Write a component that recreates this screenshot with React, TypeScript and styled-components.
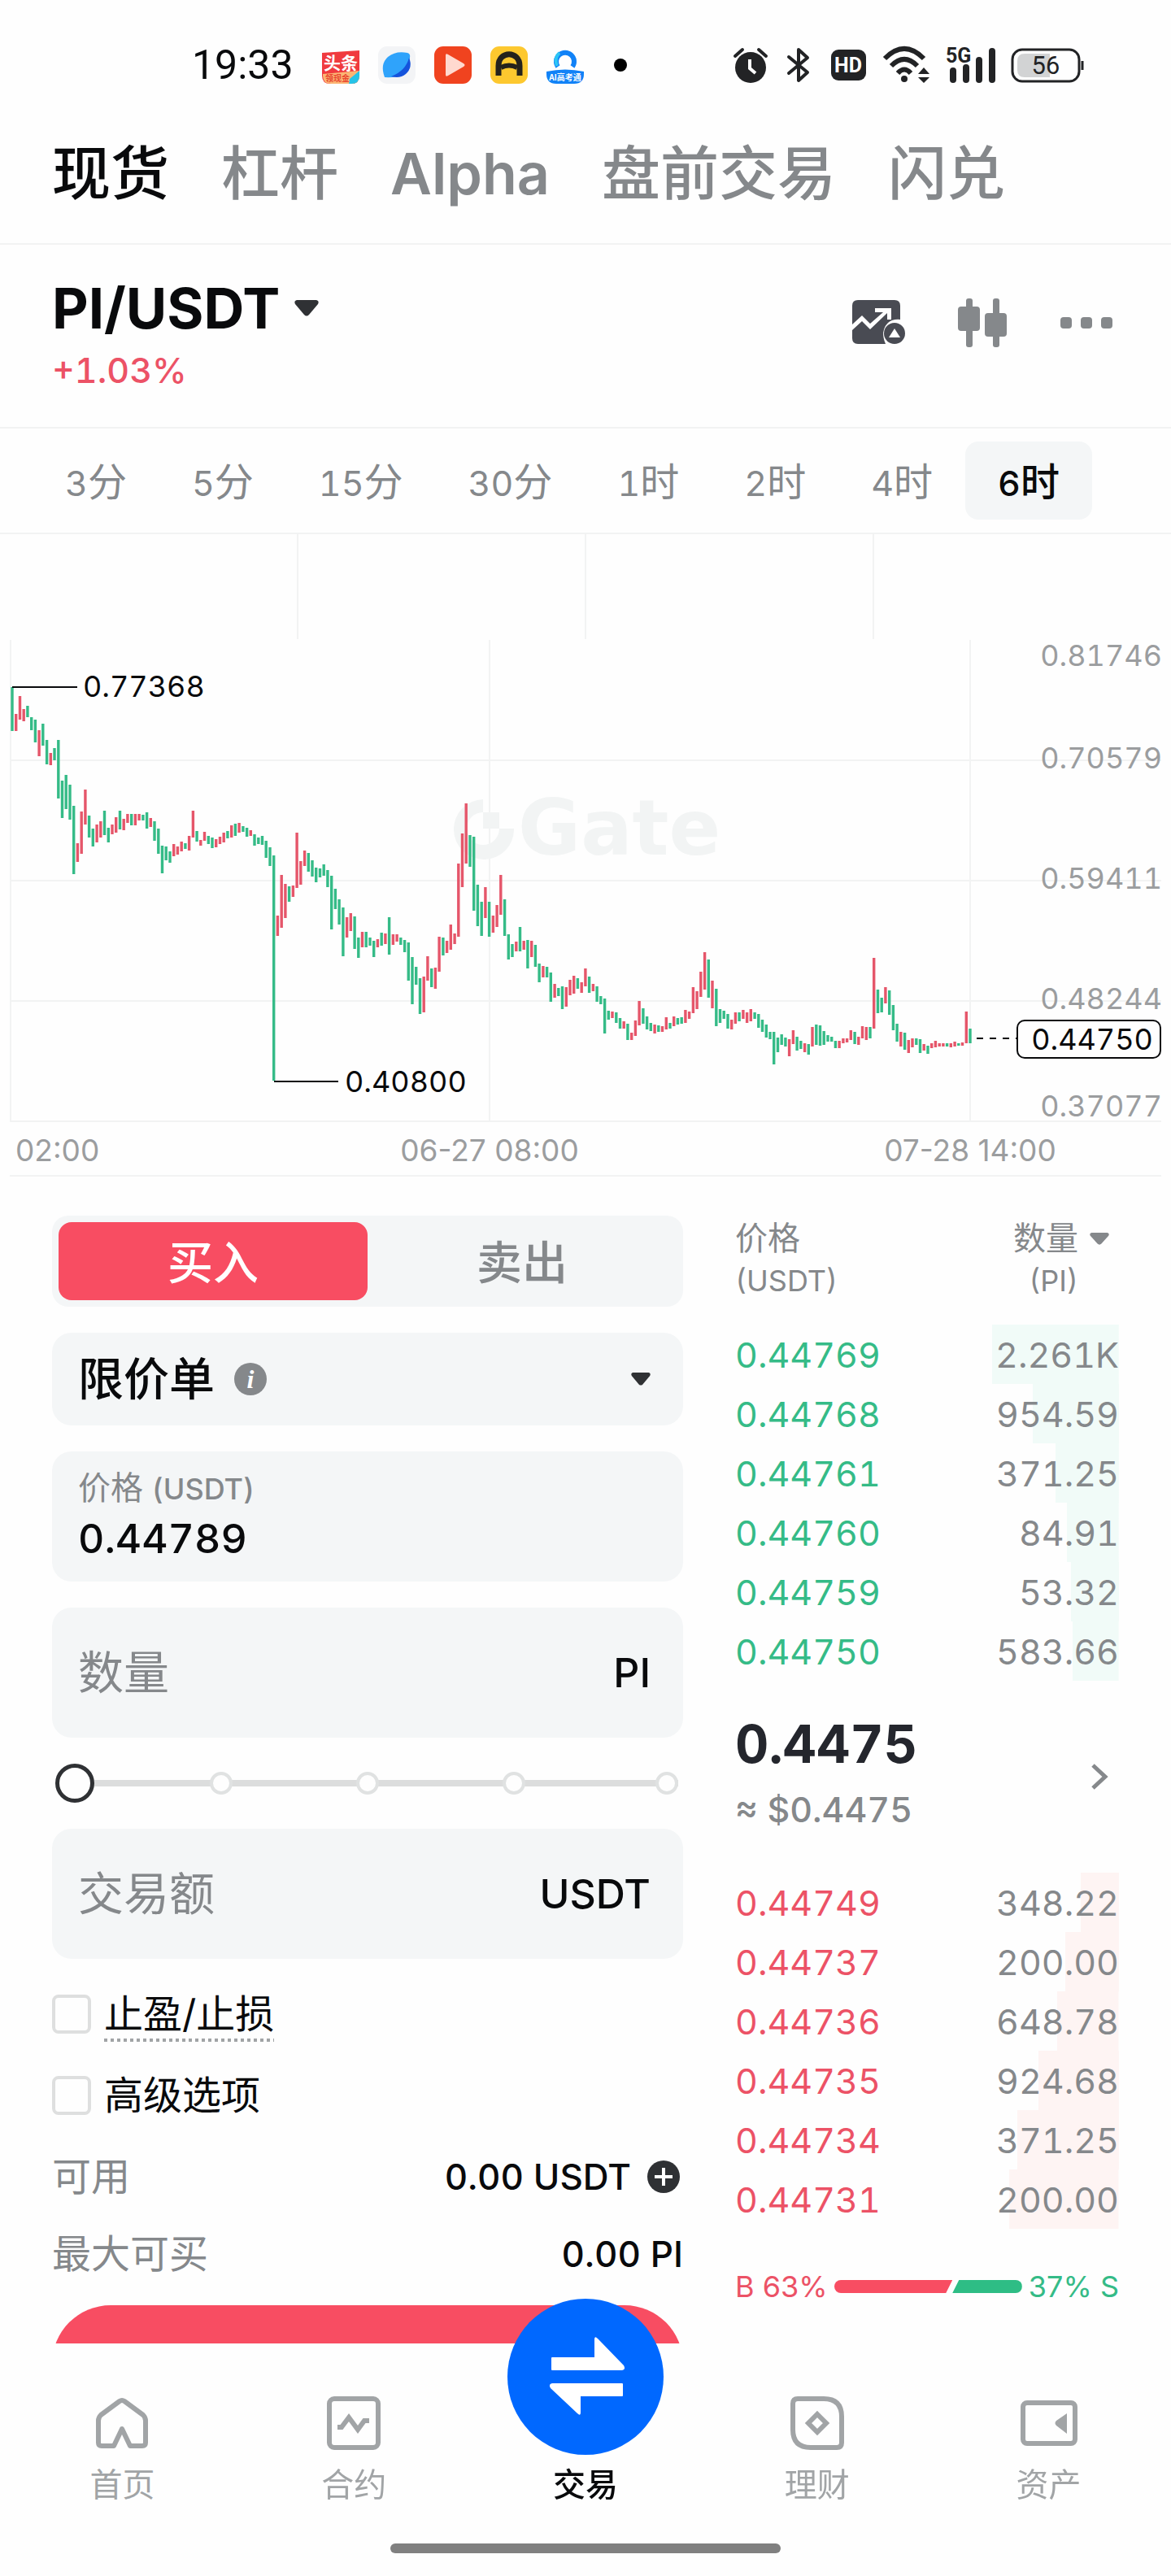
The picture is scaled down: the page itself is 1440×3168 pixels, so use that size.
import React, { useState } from "react";
import styled, { createGlobalStyle } from "styled-components";

const color = {
  page: "#fefefe",
  ink: "#090a0c",
  icon: "#2f3134",
  muted: "#85888b",
  axis: "#9b9d9f",
  nav: "#a1a4a6",
  line: "#f2f3f3",
  field: "#f4f6f7",
  outline: "#dedfdf",
  red: "#f84d62",
  redText: "#ec5266",
  redTint: "#fef4f3",
  green: "#2ebd85",
  greenText: "#35bb87",
  greenTint: "#f1fbf8",
  blue: "#0068ff",
};

const sans = `Inter, "Noto Sans CJK SC", sans-serif`;

const GlobalStyle = createGlobalStyle`
  *, *::before, *::after { box-sizing: border-box; }
  body {
    margin: 0;
    background: ${color.page};
    color: ${color.ink};
    font-family: ${sans};
    font-variant-numeric: tabular-nums;
  }
  button, input, select {
    margin: 0;
    padding: 0;
    border: 0;
    background: none;
    color: inherit;
    font: inherit;
    outline: none;
  }
  svg { display: block; flex: none; overflow: visible; }
`;

const Screen = styled.div`
  min-height: 100vh;
  display: flex;
  flex-direction: column;
`;

/* ---------- status bar ---------- */

const StatusBar = styled.div`
  height: 160px;
  padding: 0 108px 0 236px;
  display: flex;
  align-items: center;
  justify-content: space-between;
`;

const StatusGroup = styled.div<{ $gap: number }>`
  display: flex;
  align-items: center;
  gap: ${(p) => p.$gap}px;
`;

const Clock = styled.time`
  margin-right: 12px;
  font: 400 50px/60px Roboto, sans-serif;
`;

const MoreDot = styled.span`
  width: 16px;
  height: 16px;
  margin-left: 14px;
  border-radius: 50%;
  background: #000;
`;

function NotificationIcons() {
  return (
    <>
      <svg width="46" height="46" viewBox="0 0 46 46">
        <path d="M0 8 L46 5 V36 Q46 46 36 46 H10 Q0 46 0 36 Z" fill="#f03a3e" />
        <path d="M1 34 L46 30 V36 Q46 46 36 46 H11 Q1 46 1 36 Z" fill="#fbb574" />
        <path d="M34 40 L46 30 V36 Q46 46 36 46 H33 Z" fill="#25c3e8" />
        <text x="23" y="28" textAnchor="middle" fontFamily='"Noto Sans CJK SC"' fontWeight="700" fontSize="21" fill="#fff">头条</text>
        <text x="19" y="43" textAnchor="middle" fontFamily='"Noto Sans CJK SC"' fontWeight="700" fontSize="10" fill="#e8442e">领现金</text>
      </svg>
      <svg width="46" height="46" viewBox="0 0 46 46">
        <rect width="46" height="46" rx="11" fill="#f3f4f6" />
        <path d="M8 38 Q2 22 12 13 Q22 5 36 8 Q40 9 39 14 Q37 27 29 34 Q22 39 8 38Z" fill="#2fa3fb" />
        <path d="M38 14 Q43 26 34 34 Q27 40 16 37 Q34 30 38 14Z" fill="#1553dc" />
      </svg>
      <svg width="46" height="46" viewBox="0 0 46 46">
        <rect width="46" height="46" rx="11" fill="#f0431f" />
        <path d="M14 11 Q14 8 17 10 L36 21 Q39 23 36 25 L17 36 Q14 38 14 35Z" fill="#ffd9cf" />
      </svg>
      <svg width="46" height="46" viewBox="0 0 46 46">
        <rect width="46" height="46" rx="11" fill="#fdc82f" />
        <path d="M10 36 V24 C10 5 36 5 36 24 V36" fill="none" stroke="#25221c" strokeWidth="7" />
        <path d="M13 26 Q23 21 33 26" fill="none" stroke="#25221c" strokeWidth="6" />
      </svg>
      <svg width="46" height="46" viewBox="0 0 46 46">
        <path d="M14 25 A11 11 0 1 1 32 25" fill="none" stroke="#1182f7" strokeWidth="6" />
        <path d="M13 24 Q9 14 16 8" fill="none" stroke="#2cc5f5" strokeWidth="4" />
        <path d="M0 31 Q23 26 46 31 V34 Q46 46 34 46 H12 Q0 46 0 34Z" fill="#1182f7" />
        <text x="23" y="42" textAnchor="middle" fontFamily='"Noto Sans CJK SC"' fontWeight="700" fontSize="10" fill="#fff">AI高考通</text>
      </svg>
    </>
  );
}

function SystemIcons() {
  const ink = "#222325";
  return (
    <>
      <svg width="42" height="44" viewBox="0 0 42 44">
        <circle cx="21" cy="25" r="19" fill={ink} />
        <path d="M2 11 L11 3 M40 11 L31 3" stroke={ink} strokeWidth="4" strokeLinecap="round" />
        <path d="M20 15 V26 L27 32" fill="none" stroke="#fff" strokeWidth="4" />
      </svg>
      <svg width="38" height="44" viewBox="-4 0 38 44">
        <path d="M2 12 L25 31 L14 41 V3 L25 13 L2 32" fill="none" stroke={ink} strokeWidth="4" strokeLinejoin="round" strokeLinecap="round" />
      </svg>
      <svg width="43" height="38" viewBox="0 0 43 38">
        <rect width="43" height="38" rx="9" fill={ink} />
        <text x="21" y="28" textAnchor="middle" fontFamily="Roboto" fontWeight="700" fontSize="25" fill="#fff">HD</text>
      </svg>
      <svg width="58" height="46" viewBox="0 0 58 46">
        <path d="M3 15 Q27 -9 51 15" fill="none" stroke={ink} strokeWidth="6" />
        <path d="M11 24 Q27 8 43 24" fill="none" stroke={ink} strokeWidth="6" />
        <path d="M19 33 Q27 24 35 33" fill="none" stroke={ink} strokeWidth="6" />
        <circle cx="27" cy="40" r="4" fill={ink} />
        <path d="M44 34 L51 26 L58 34Z M44 38 L51 45 L58 38Z" fill={ink} />
      </svg>
      <svg width="61" height="44" viewBox="0 0 61 44">
        <text x="0" y="19" fontFamily="Roboto" fontWeight="700" fontSize="25" fill={ink}>5G</text>
        <path d="M9 40 V29 M25 40 V25 M41 40 V16 M57 40 V5" stroke={ink} strokeWidth="8" strokeLinecap="round" />
      </svg>
      <svg width="88" height="41" viewBox="0 0 88 41">
        <rect x="1" y="1" width="82" height="39" rx="12" fill="none" stroke={ink} strokeWidth="3" />
        <path d="M16 6 H47 V35 H16 Q7 35 7 26 V15 Q7 6 16 6Z" fill="#d2d3d4" />
        <path d="M87 15 V26" stroke={ink} strokeWidth="3" />
        <text x="42" y="31" textAnchor="middle" fontFamily="Roboto" fontSize="31" fill={ink}>56</text>
      </svg>
    </>
  );
}

/* ---------- market tabs ---------- */

const MarketTabs = styled.nav`
  display: flex;
  align-items: baseline;
  gap: 64px;
  padding: 0 64px 32px;
  border-bottom: 2px solid ${color.line};
  white-space: nowrap;
`;

const MarketTab = styled.a<{ $active?: boolean; $latin?: boolean }>`
  color: ${(p) => (p.$active ? color.ink : color.muted)};
  font-size: ${(p) => (p.$latin ? 70 : 72)}px;
  font-weight: ${(p) => (p.$latin ? 600 : 500)};
  line-height: 106px;
  text-decoration: none;
`;

/* ---------- pair header ---------- */

const PairHeader = styled.header`
  display: flex;
  justify-content: space-between;
  padding: 36px 72px 40px 64px;
  border-bottom: 2px solid ${color.line};
`;

const PairInfo = styled.div`
  display: flex;
  flex-direction: column;
  align-items: flex-start;
  gap: 4px;
`;

const PairButton = styled.button`
  display: flex;
  align-items: center;
  gap: 18px;
  font-size: 69px;
  font-weight: 700;
  line-height: 84px;
`;

const Change = styled.span`
  color: ${color.redText};
  font-size: 43px;
  font-weight: 500;
  line-height: 60px;
`;

const HeaderActions = styled.div`
  display: flex;
  gap: 64px;
  height: 120px;
`;

const IconButton = styled.button`
  display: flex;
  align-items: center;
  justify-content: center;
`;

function Caret({ width, height, fill = color.icon }: { width: number; height: number; fill?: string }) {
  return (
    <svg width={width} height={height} viewBox="0 0 30 20" preserveAspectRatio="none">
      <path d="M3 0 H27 Q31 1 29 5 L18 18 Q15 21 12 18 L1 5 Q-1 1 3 0Z" fill={fill} />
    </svg>
  );
}

/* ---------- interval bar ---------- */

const IntervalBar = styled.div`
  display: flex;
  padding: 16px 40px;
  border-bottom: 2px solid ${color.line};
`;

const IntervalButton = styled.button<{ $active?: boolean }>`
  height: 96px;
  padding: 0 40px 4px;
  border-radius: 16px;
  background: ${(p) => (p.$active ? color.field : "transparent")};
  color: ${(p) => (p.$active ? color.ink : color.muted)};
  font-size: 48px;
  font-weight: ${(p) => (p.$active ? 500 : 400)};
  white-space: nowrap;
`;

const IntervalNumber = styled.span`
  font-size: 43px;
`;

const intervals: [string, string][] = [
  ["3", "分"],
  ["5", "分"],
  ["15", "分"],
  ["30", "分"],
  ["1", "时"],
  ["2", "时"],
  ["4", "时"],
  ["6", "时"],
];

/* ---------- chart ---------- */

// One candle per entry: direction (r = up, g = down), top and bottom of the bar.
const candles = `
g844-898 r877-898 r855-884 r871-886 g867-881 g881-897 g884-912 r897-929 g889-916 g909-939
r925-940 g919-934 g909-981 g959-1005 g952-994 g964-1007 g990-1074 r1036-1059 r997-1049 r970-1013
g1002-1029 g1018-1040 r1013-1035 r1009-1029 g996-1026 g1017-1035 r1013-1025 r1004-1023 g996-1019 r1006-1020
r1000-1011 g1000-1014 r1000-1014 r1000-1008 g1001-1008 g998-1018 r1005-1016 g1009-1033 g1018-1049 g1039-1073
g1040-1057 g1046-1060 r1037-1052 r1040-1050 r1034-1046 g1036-1043 r1027-1045 r996-1029 g1021-1034 r1032-1039
r1022-1033 g1027-1037 g1029-1042 r1031-1041 r1028-1037 r1023-1035 g1021-1030 r1014-1029 g1012-1027 r1011-1023
g1015-1022 g1017-1028 r1020-1027 g1025-1039 g1029-1037 g1027-1038 g1033-1054 g1041-1064 g1051-1328 r1125-1150
r1075-1140 r1086-1128 g1089-1108 r1088-1102 r1023-1091 r1058-1087 r1045-1064 g1048-1071 g1057-1077 g1066-1084
g1067-1078 g1062-1076 g1069-1090 g1076-1142 g1092-1117 g1105-1136 g1115-1175 r1127-1152 r1122-1144 g1126-1166
g1152-1177 r1145-1164 g1145-1164 g1152-1162 g1156-1176 r1154-1164 g1146-1162 r1147-1160 g1127-1173 r1148-1161
r1148-1157 g1152-1161 g1155-1170 g1158-1205 g1176-1234 g1188-1210 g1202-1246 r1200-1244 r1175-1205 g1190-1213
r1189-1215 r1151-1194 g1152-1174 r1156-1171 r1136-1167 r1147-1160 r1061-1151 r1024-1090 r987-1061 g1026-1065
g1028-1119 g1087-1138 g1108-1150 r1090-1128 g1108-1151 r1125-1146 r1112-1139 r1075-1124 g1105-1150 g1148-1179
g1160-1176 r1157-1169 g1139-1169 r1156-1167 g1155-1190 r1156-1176 g1161-1188 g1184-1207 r1187-1201 g1188-1201
g1195-1231 r1209-1226 g1214-1224 g1212-1240 r1213-1237 r1204-1223 r1199-1221 g1202-1215 r1207-1220 r1190-1212
g1200-1220 r1209-1218 g1212-1231 g1224-1234 g1227-1270 g1242-1253 r1243-1251 g1244-1257 g1251-1264 r1255-1264
g1258-1278 r1269-1278 r1254-1273 r1230-1260 g1239-1258 g1249-1265 g1257-1267 r1259-1270 g1260-1268 r1261-1268
r1250-1265 g1257-1264 r1249-1261 g1251-1259 g1250-1258 r1241-1257 r1243-1252 r1213-1245 r1218-1240 r1194-1225
r1170-1216 g1179-1226 r1205-1239 g1215-1261 g1240-1257 g1242-1252 g1246-1264 r1253-1265 r1244-1258 g1244-1255
r1241-1252 r1244-1257 r1240-1255 g1244-1252 g1246-1263 g1253-1268 g1259-1275 g1268-1277 g1268-1308 g1275-1293
g1271-1284 g1275-1286 r1277-1298 r1266-1283 g1274-1291 g1279-1289 r1282-1293 g1283-1296 r1262-1286 g1259-1284
g1260-1285 g1267-1284 g1272-1280 g1274-1280 g1279-1288 r1279-1288 r1276-1282 r1276-1281 r1266-1278 g1268-1283
r1274-1284 r1261-1276 r1262-1278 g1262-1276 r1177-1264 g1216-1245 g1226-1244 r1213-1233 g1217-1247 g1235-1266
g1258-1280 r1268-1286 g1269-1290 r1278-1294 r1276-1287 g1276-1284 g1277-1294 r1283-1291 g1285-1295 r1282-1288
r1279-1287 r1282-1286 r1282-1286 g1282-1286 r1282-1287 r1280-1286 g1282-1285 r1281-1285 r1243-1282 g1264-1282`
  .trim()
  .split(/\s+/)
  .map((entry, index) => {
    const [top, bottom] = entry.slice(1).split("-").map(Number);
    return { up: entry[0] === "r", x: 15 + (index * 1178) / 249, top, bottom };
  });

const barPath = (up: boolean) =>
  candles
    .filter((c) => c.up === up)
    .map((c) => `M${c.x.toFixed(1)} ${c.top}V${c.bottom}`)
    .join("");

const priceTicks: [string, number][] = [
  ["0.81746", 806],
  ["0.70579", 932],
  ["0.59411", 1080],
  ["0.48244", 1228],
  ["0.37077", 1360],
];

const ChartSvg = styled.svg`
  width: 100%;
  height: auto;
  font-family: ${sans};
  font-size: 36px;
`;

const DateLabel = styled.text`
  font-size: 37px;
  font-variant-numeric: normal;
`;

const WatermarkText = styled.text`
  font: 700 94px "DejaVu Sans", sans-serif;
`;

function PriceChart() {
  return (
    <ChartSvg viewBox="0 656 1440 790" role="img" aria-label="PI/USDT K线图">
      <g stroke={color.line} strokeWidth="2">
        <path d="M366 656V785 M720 656V785 M1074 656V785" />
        <path d="M13 786V1378 M602 786V1378 M1193 786V1378" />
        <path d="M12 934H1428 M12 1082H1428 M12 1230H1428 M12 1378H1428 M12 1445H1428" />
      </g>
      <g fill="#f2f4f4">
        <path d="M594 982 A37 37 0 1 0 632 1018 H614 A20 20 0 1 1 594 998Z" />
        <rect x="594" y="998" width="20" height="20" />
        <WatermarkText x="637" y="1050">Gate</WatermarkText>
      </g>
      <path d={barPath(false)} stroke={color.greenText} strokeWidth="3.4" />
      <path d={barPath(true)} stroke="#e5566a" strokeWidth="3.4" />
      <path d="M15 844H95 M337 1329H416" stroke={color.ink} strokeWidth="2" />
      <path d="M1201 1276H1250" stroke={color.ink} strokeWidth="2" strokeDasharray="8 8" />
      <g fill={color.ink}>
        <text x="102" y="856">0.77368</text>
        <text x="424" y="1342">0.40800</text>
      </g>
      <g fill={color.axis}>
        {priceTicks.map(([label, y]) => (
          <text key={label} x="1429" y={y + 12} textAnchor="end">{label}</text>
        ))}
        <DateLabel x="19" y="1427">02:00</DateLabel>
        <DateLabel x="602" y="1427" textAnchor="middle">06-27 08:00</DateLabel>
        <DateLabel x="1193" y="1427" textAnchor="middle">07-28 14:00</DateLabel>
      </g>
      <rect x="1251" y="1254" width="176" height="46" rx="9" fill={color.page} stroke={color.ink} strokeWidth="2" />
      <text x="1343" y="1290" textAnchor="middle" fill={color.ink}>0.44750</text>
    </ChartSvg>
  );
}

/* ---------- order form ---------- */

const TradeArea = styled.main`
  display: grid;
  grid-template-columns: minmax(0, 776fr) minmax(0, 472fr);
  gap: 64px;
  align-items: start;
  padding: 48px 64px 190px;
`;

const OrderForm = styled.form`
  display: flex;
  flex-direction: column;
  gap: 32px;
`;

const SideSwitch = styled.div`
  display: flex;
  height: 112px;
  padding: 8px;
  border-radius: 20px;
  background: ${color.field};
`;

const SideButton = styled.button<{ $active?: boolean }>`
  flex: 1;
  padding-bottom: 6px;
  border-radius: 16px;
  background: ${(p) => (p.$active ? color.red : "transparent")};
  color: ${(p) => (p.$active ? "#fff" : color.muted)};
  font-size: 56px;
  font-weight: 500;
`;

const Field = styled.div<{ $height: number }>`
  display: flex;
  align-items: center;
  height: ${(p) => p.$height}px;
  padding: 0 40px 0 32px;
  border-radius: 24px;
  background: ${color.field};
`;

const TypeSelect = styled.select`
  appearance: none;
  margin-right: 24px;
  font-size: 56px;
  font-weight: 500;
`;

const Spacer = styled.span`
  flex: 1;
`;

const PriceField = styled.label`
  display: flex;
  flex-direction: column;
  height: 160px;
  padding: 17px 32px;
  border-radius: 24px;
  background: ${color.field};
`;

const FieldCaption = styled.span`
  color: ${color.muted};
  font-size: 40px;
  line-height: 56px;
`;

const Latin = styled.span`
  font-size: 36px;
  font-weight: 500;
`;

const PriceInput = styled.input`
  width: 100%;
  height: 66px;
  font-size: 50px;
  font-weight: 500;
`;

const AmountInput = styled.input`
  flex: 1;
  min-width: 0;
  height: 96px;
  font-size: 56px;
  &::placeholder {
    color: ${color.muted};
    opacity: 1;
  }
`;

const Unit = styled.label`
  font-size: 50px;
  font-weight: 500;
`;

const SliderBox = styled.div`
  position: relative;
  height: 48px;
  padding: 0 6px 0 14px;
`;

const Stops = styled.div`
  display: grid;
  grid-template-columns: 45fr 45fr 45fr 47fr 28px;
  align-items: center;
  height: 48px;
  background: linear-gradient(#dcdddd, #dcdddd) center / 100% 8px no-repeat;
`;

const Stop = styled.span`
  width: 28px;
  height: 28px;
  border: 4px solid #e0e2e2;
  border-radius: 50%;
  background: ${color.page};
`;

const Range = styled.input`
  position: absolute;
  inset: 0 4px;
  height: 48px;
  width: calc(100% - 8px);
  appearance: none;
  &::-webkit-slider-thumb {
    appearance: none;
    width: 48px;
    height: 48px;
    border: 5px solid ${color.icon};
    border-radius: 50%;
    background: ${color.page};
  }
`;

const Options = styled.div`
  display: flex;
  flex-direction: column;
  gap: 28px;
`;

const Option = styled.label`
  display: flex;
  align-items: center;
  gap: 16px;
  height: 72px;
  font-size: 48px;
  line-height: 68px;
`;

const Checkbox = styled.input`
  appearance: none;
  width: 48px;
  height: 48px;
  border: 4px solid ${color.outline};
  border-radius: 8px;
`;

const Dotted = styled.span`
  background: repeating-linear-gradient(90deg, ${color.nav} 0 4px, transparent 4px 8px) bottom / 100% 4px no-repeat;
`;

const Balance = styled.div`
  display: flex;
  align-items: center;
  height: 63px;
  color: ${color.muted};
  font-size: 48px;
  line-height: 62px;
`;

const BalanceValue = styled.span`
  margin-left: auto;
  color: ${color.ink};
  font-size: 44px;
  font-weight: 500;
`;

const AddButton = styled.button`
  margin: 0 4px 0 20px;
`;

const SubmitButton = styled.button`
  height: 144px;
  border-radius: 72px;
  background: ${color.red};
  color: #fff;
  font-size: 56px;
  font-weight: 500;
`;

function Slider() {
  return (
    <SliderBox>
      <Stops>
        <Stop />
        <Stop />
        <Stop />
        <Stop />
        <Stop />
      </Stops>
      <Range type="range" min="0" max="100" step="1" defaultValue="0" aria-label="仓位比例" />
    </SliderBox>
  );
}

/* ---------- order book ---------- */

const BookTable = styled.table`
  width: 100%;
  border-collapse: collapse;
  table-layout: fixed;
`;

const BookHead = styled.th`
  height: 134px;
  padding: 2px 0 0;
  vertical-align: top;
  text-align: left;
  color: ${color.muted};
  font-size: 40px;
  font-weight: 400;
  line-height: 52px;
`;

const HeadLines = styled.span`
  display: block;
`;

const HeadUnit = styled.span`
  display: block;
  font-size: 36px;
`;

const QuantityHead = styled.button`
  display: flex;
  align-items: flex-start;
  gap: 14px;
  margin-left: auto;
  padding-right: 12px;
  text-align: right;
  line-height: 52px;
  white-space: nowrap;
`;

const CaretSlot = styled.span`
  display: flex;
  align-items: center;
  height: 52px;
`;

const PriceCell = styled.td<{ $side: "ask" | "bid" }>`
  height: 73px;
  padding: 0;
  color: ${(p) => (p.$side === "ask" ? color.greenText : color.redText)};
  font-size: 43px;
`;

const QuantityCell = styled.td<{ $side: "ask" | "bid" }>`
  height: 73px;
  padding: 0;
  text-align: right;
  color: ${color.muted};
  font-size: 43px;
  background-image: ${(p) => {
    const tint = p.$side === "ask" ? color.greenTint : color.redTint;
    return `linear-gradient(${tint}, ${tint})`;
  }};
  background-repeat: no-repeat;
  background-position: right;
`;

const LastPrice = styled.button`
  display: flex;
  align-items: center;
  justify-content: space-between;
  width: 100%;
  height: 236px;
  padding-right: 14px;
  text-align: left;
`;

const LastValue = styled.span`
  display: block;
  color: #24262d;
  font-size: 64px;
  font-weight: 700;
  line-height: 80px;
`;

const LastFiat = styled.span`
  display: block;
  color: ${color.muted};
  font-size: 43px;
  font-weight: 500;
  line-height: 80px;
`;

const RatioRow = styled.div`
  display: flex;
  align-items: center;
  gap: 8px;
  height: 52px;
  margin-top: 45px;
  font-size: 36px;
  font-variant-numeric: normal;
  white-space: nowrap;
`;

const RatioLabel = styled.span<{ $tone: string }>`
  color: ${(p) => p.$tone};
`;

const RatioTrack = styled.div`
  flex: 1;
  display: flex;
  height: 16px;
`;

const BuyShare = styled.span`
  border-radius: 8px 0 0 8px;
  background: ${color.red};
  clip-path: polygon(0 0, 100% 0, calc(100% - 8px) 100%, 0 100%);
`;

const SellShare = styled.span`
  flex: 1;
  border-radius: 0 8px 8px 0;
  background: ${color.green};
  clip-path: polygon(8px 0, 100% 0, 100% 100%, 0 100%);
`;

type Level = [price: string, quantity: string, depth: number];

const asks: Level[] = [
  ["0.44769", "2.261K", 66],
  ["0.44768", "954.59", 45],
  ["0.44761", "371.25", 33],
  ["0.44760", "84.91", 27],
  ["0.44759", "53.32", 25],
  ["0.44750", "583.66", 24],
];

const bids: Level[] = [
  ["0.44749", "348.22", 20],
  ["0.44737", "200.00", 28],
  ["0.44736", "648.78", 32],
  ["0.44735", "924.68", 42],
  ["0.44734", "371.25", 53],
  ["0.44731", "200.00", 57],
];

function Levels({ side, levels }: { side: "ask" | "bid"; levels: Level[] }) {
  return (
    <tbody>
      {levels.map(([price, quantity, depth]) => (
        <tr key={price}>
          <PriceCell $side={side}>{price}</PriceCell>
          <QuantityCell $side={side} style={{ backgroundSize: `${depth}% 100%` }}>{quantity}</QuantityCell>
        </tr>
      ))}
    </tbody>
  );
}

function OrderBook() {
  return (
    <section aria-label="盘口">
      <BookTable>
        <thead>
          <tr>
            <BookHead>
              <HeadLines>价格</HeadLines>
              <HeadUnit>(USDT)</HeadUnit>
            </BookHead>
            <BookHead>
              <QuantityHead type="button">
                <span>
                  <HeadLines>数量</HeadLines>
                  <HeadUnit>(PI)</HeadUnit>
                </span>
                <CaretSlot>
                  <Caret width={24} height={15} fill={color.muted} />
                </CaretSlot>
              </QuantityHead>
            </BookHead>
          </tr>
        </thead>
        <Levels side="ask" levels={asks} />
      </BookTable>
      <LastPrice type="button">
        <span>
          <LastValue>0.4475</LastValue>
          <LastFiat>≈ $0.4475</LastFiat>
        </span>
        <svg width="20" height="32" viewBox="0 0 20 32">
          <path d="M2 2 L17 16 L2 30" fill="none" stroke={color.muted} strokeWidth="5" />
        </svg>
      </LastPrice>
      <BookTable>
        <Levels side="bid" levels={bids} />
      </BookTable>
      <RatioRow>
        <RatioLabel $tone={color.redText}>B 63%</RatioLabel>
        <RatioTrack>
          <BuyShare style={{ width: "63%" }} />
          <SellShare />
        </RatioTrack>
        <RatioLabel $tone={color.greenText}>37% S</RatioLabel>
      </RatioRow>
    </section>
  );
}

/* ---------- bottom navigation ---------- */

const BottomNav = styled.nav`
  position: fixed;
  left: 0;
  right: 0;
  bottom: 0;
  padding: 0 8px 28px;
  background: ${color.page};
`;

const NavItems = styled.div`
  display: flex;
  height: 246px;
`;

const NavItem = styled.a<{ $active?: boolean }>`
  flex: 1;
  display: flex;
  flex-direction: column;
  align-items: center;
  justify-content: flex-end;
  gap: 12px;
  padding-bottom: 42px;
  color: ${(p) => (p.$active ? color.ink : color.nav)};
  font-size: 40px;
  font-weight: ${(p) => (p.$active ? 500 : 400)};
  line-height: 60px;
  text-decoration: none;
`;

const TradeBubble = styled.span`
  margin-bottom: -5px;
  border-radius: 50%;
  background: ${color.blue};
`;

const HomeIndicator = styled.div`
  width: 480px;
  height: 12px;
  margin: 0 auto;
  border-radius: 6px;
  background: #808080;
`;

function Navigation() {
  const stroke = { fill: "none", stroke: color.nav, strokeWidth: 6, strokeLinejoin: "round" as const };
  return (
    <BottomNav aria-label="主导航">
      <NavItems>
        <NavItem href="#home">
          <svg width="68" height="68" viewBox="0 0 68 68">
            <path {...stroke} d="M5 31 Q5 27 8 24 L31 7 Q34 5 37 7 L60 24 Q63 27 63 31 V58 Q63 62 59 62 H44 L34 41 L24 62 H9 Q5 62 5 58Z" />
          </svg>
          首页
        </NavItem>
        <NavItem href="#futures">
          <svg width="68" height="68" viewBox="0 0 68 68">
            <rect {...stroke} x="4" y="4" width="60" height="60" rx="6" />
            <path {...stroke} strokeLinejoin="miter" d="M14 39 H19 L28 27 L39 42 L47 31 H53" />
          </svg>
          合约
        </NavItem>
        <NavItem href="#trade" $active>
          <TradeBubble>
            <svg width="192" height="192" viewBox="0 0 192 192">
              <path d="M55 72 H107 V50 Q107 45 111 49 L143 82 Q146 87 141 88 H55 Q54 88 54 87 V73 Q54 72 55 72Z" fill="#fff" />
              <path d="M141 104 H55 Q50 105 53 110 L86 141 Q90 145 90 140 V120 H141 Q142 120 142 119 V105 Q142 104 141 104Z" fill="#fff" />
            </svg>
          </TradeBubble>
          交易
        </NavItem>
        <NavItem href="#earn">
          <svg width="68" height="68" viewBox="0 0 68 68">
            <path {...stroke} d="M10 4 H42 Q64 4 64 26 V58 Q64 64 58 64 H26 Q4 64 4 42 V10 Q4 4 10 4Z" />
            <path {...stroke} strokeLinejoin="miter" d="M34 23 L45 34 L34 45 L23 34Z" />
          </svg>
          理财
        </NavItem>
        <NavItem href="#assets">
          <svg width="72" height="68" viewBox="0 0 72 68">
            <rect {...stroke} x="4" y="9" width="64" height="50" rx="5" />
            <path d="M58 22 V47 L45 37 Q42 34 45 31Z" fill={color.nav} />
          </svg>
          资产
        </NavItem>
      </NavItems>
      <HomeIndicator />
    </BottomNav>
  );
}

export default function App() {
  const [interval, setInterval] = useState("6时");
  const [side, setSide] = useState<"buy" | "sell">("buy");

  return (
    <Screen>
      <GlobalStyle />
      <StatusBar>
        <StatusGroup $gap={23}>
          <Clock>19:33</Clock>
          <NotificationIcons />
          <MoreDot />
        </StatusGroup>
        <StatusGroup $gap={20}>
          <SystemIcons />
        </StatusGroup>
      </StatusBar>

      <MarketTabs>
        <MarketTab href="#spot" $active>现货</MarketTab>
        <MarketTab href="#margin">杠杆</MarketTab>
        <MarketTab href="#alpha" $latin>Alpha</MarketTab>
        <MarketTab href="#premarket">盘前交易</MarketTab>
        <MarketTab href="#convert">闪兑</MarketTab>
      </MarketTabs>

      <PairHeader>
        <PairInfo>
          <PairButton type="button">
            PI/USDT
            <Caret width={30} height={20} />
          </PairButton>
          <Change>+1.03%</Change>
        </PairInfo>
        <HeaderActions>
          <IconButton type="button" aria-label="图表">
            <svg width="64" height="56" viewBox="0 0 64 56">
              <path d="M7 0 H52 Q59 0 59 7 V24 Q50 23 44 28 Q34 38 41 54 H7 Q0 54 0 47 V37 L12 26 L22 36 L43 16 V24 H48 V10 H28 V15 H38 L22 29 L12 19 L0 30 V7 Q0 0 7 0Z" fill="#494b53" />
              <circle cx="52" cy="41" r="13" fill="#494b53" />
              <path d="M52 35 L59 46 H45Z" fill="#fff" />
            </svg>
          </IconButton>
          <IconButton type="button" aria-label="K线">
            <svg width="64" height="60" viewBox="0 0 64 60">
              <g fill={color.muted}>
                <rect x="2" y="10" width="27" height="30" rx="4" />
                <rect x="12" y="0" width="8" height="60" rx="3" />
                <rect x="35" y="18" width="27" height="29" rx="4" />
                <rect x="45" y="0" width="8" height="60" rx="3" />
              </g>
            </svg>
          </IconButton>
          <IconButton type="button" aria-label="更多">
            <svg width="64" height="14" viewBox="0 0 64 14">
              <g fill={color.muted}>
                <rect x="0" width="14" height="14" rx="4" />
                <rect x="25" width="14" height="14" rx="4" />
                <rect x="50" width="14" height="14" rx="4" />
              </g>
            </svg>
          </IconButton>
        </HeaderActions>
      </PairHeader>

      <IntervalBar>
        {intervals.map(([count, unit]) => (
          <IntervalButton
            key={count + unit}
            type="button"
            $active={interval === count + unit}
            onClick={() => setInterval(count + unit)}
          >
            <IntervalNumber>{count}</IntervalNumber>
            {unit}
          </IntervalButton>
        ))}
      </IntervalBar>

      <PriceChart />

      <TradeArea>
        <OrderForm onSubmit={(event) => event.preventDefault()}>
          <SideSwitch>
            <SideButton type="button" $active={side === "buy"} onClick={() => setSide("buy")}>买入</SideButton>
            <SideButton type="button" $active={side === "sell"} onClick={() => setSide("sell")}>卖出</SideButton>
          </SideSwitch>

          <Field $height={114}>
            <TypeSelect aria-label="订单类型">
              <option>限价单</option>
            </TypeSelect>
            <IconButton type="button" aria-label="说明">
              <svg width="40" height="40" viewBox="0 0 40 40">
                <circle cx="20" cy="20" r="20" fill={color.muted} />
                <text x="20" y="31" textAnchor="middle" fontFamily='"Liberation Serif", serif' fontStyle="italic" fontWeight="700" fontSize="32" fill="#fff">i</text>
              </svg>
            </IconButton>
            <Spacer />
            <Caret width={24} height={16} />
          </Field>

          <PriceField>
            <FieldCaption>
              价格 <Latin>(USDT)</Latin>
            </FieldCaption>
            <PriceInput type="text" inputMode="decimal" defaultValue="0.44789" />
          </PriceField>

          <Field $height={160}>
            <AmountInput id="amount" type="text" inputMode="decimal" placeholder="数量" />
            <Unit htmlFor="amount">PI</Unit>
          </Field>

          <Slider />

          <Field $height={160}>
            <AmountInput id="total" type="text" inputMode="decimal" placeholder="交易额" />
            <Unit htmlFor="total">USDT</Unit>
          </Field>

          <Options>
            <Option>
              <Checkbox type="checkbox" />
              <Dotted>止盈/止损</Dotted>
            </Option>
            <Option>
              <Checkbox type="checkbox" />
              <span>高级选项</span>
            </Option>
          </Options>

          <Balance>
            可用
            <BalanceValue>0.00 USDT</BalanceValue>
            <AddButton type="button" aria-label="充值">
              <svg width="40" height="40" viewBox="0 0 40 40">
                <circle cx="20" cy="20" r="20" fill={color.icon} />
                <path d="M20 9 V31 M9 20 H31" stroke="#fff" strokeWidth="4" />
              </svg>
            </AddButton>
          </Balance>
          <Balance>
            最大可买
            <BalanceValue>0.00 PI</BalanceValue>
          </Balance>

          <SubmitButton type="submit">{side === "buy" ? "买入 PI" : "卖出 PI"}</SubmitButton>
        </OrderForm>

        <OrderBook />
      </TradeArea>

      <Navigation />
    </Screen>
  );
}
